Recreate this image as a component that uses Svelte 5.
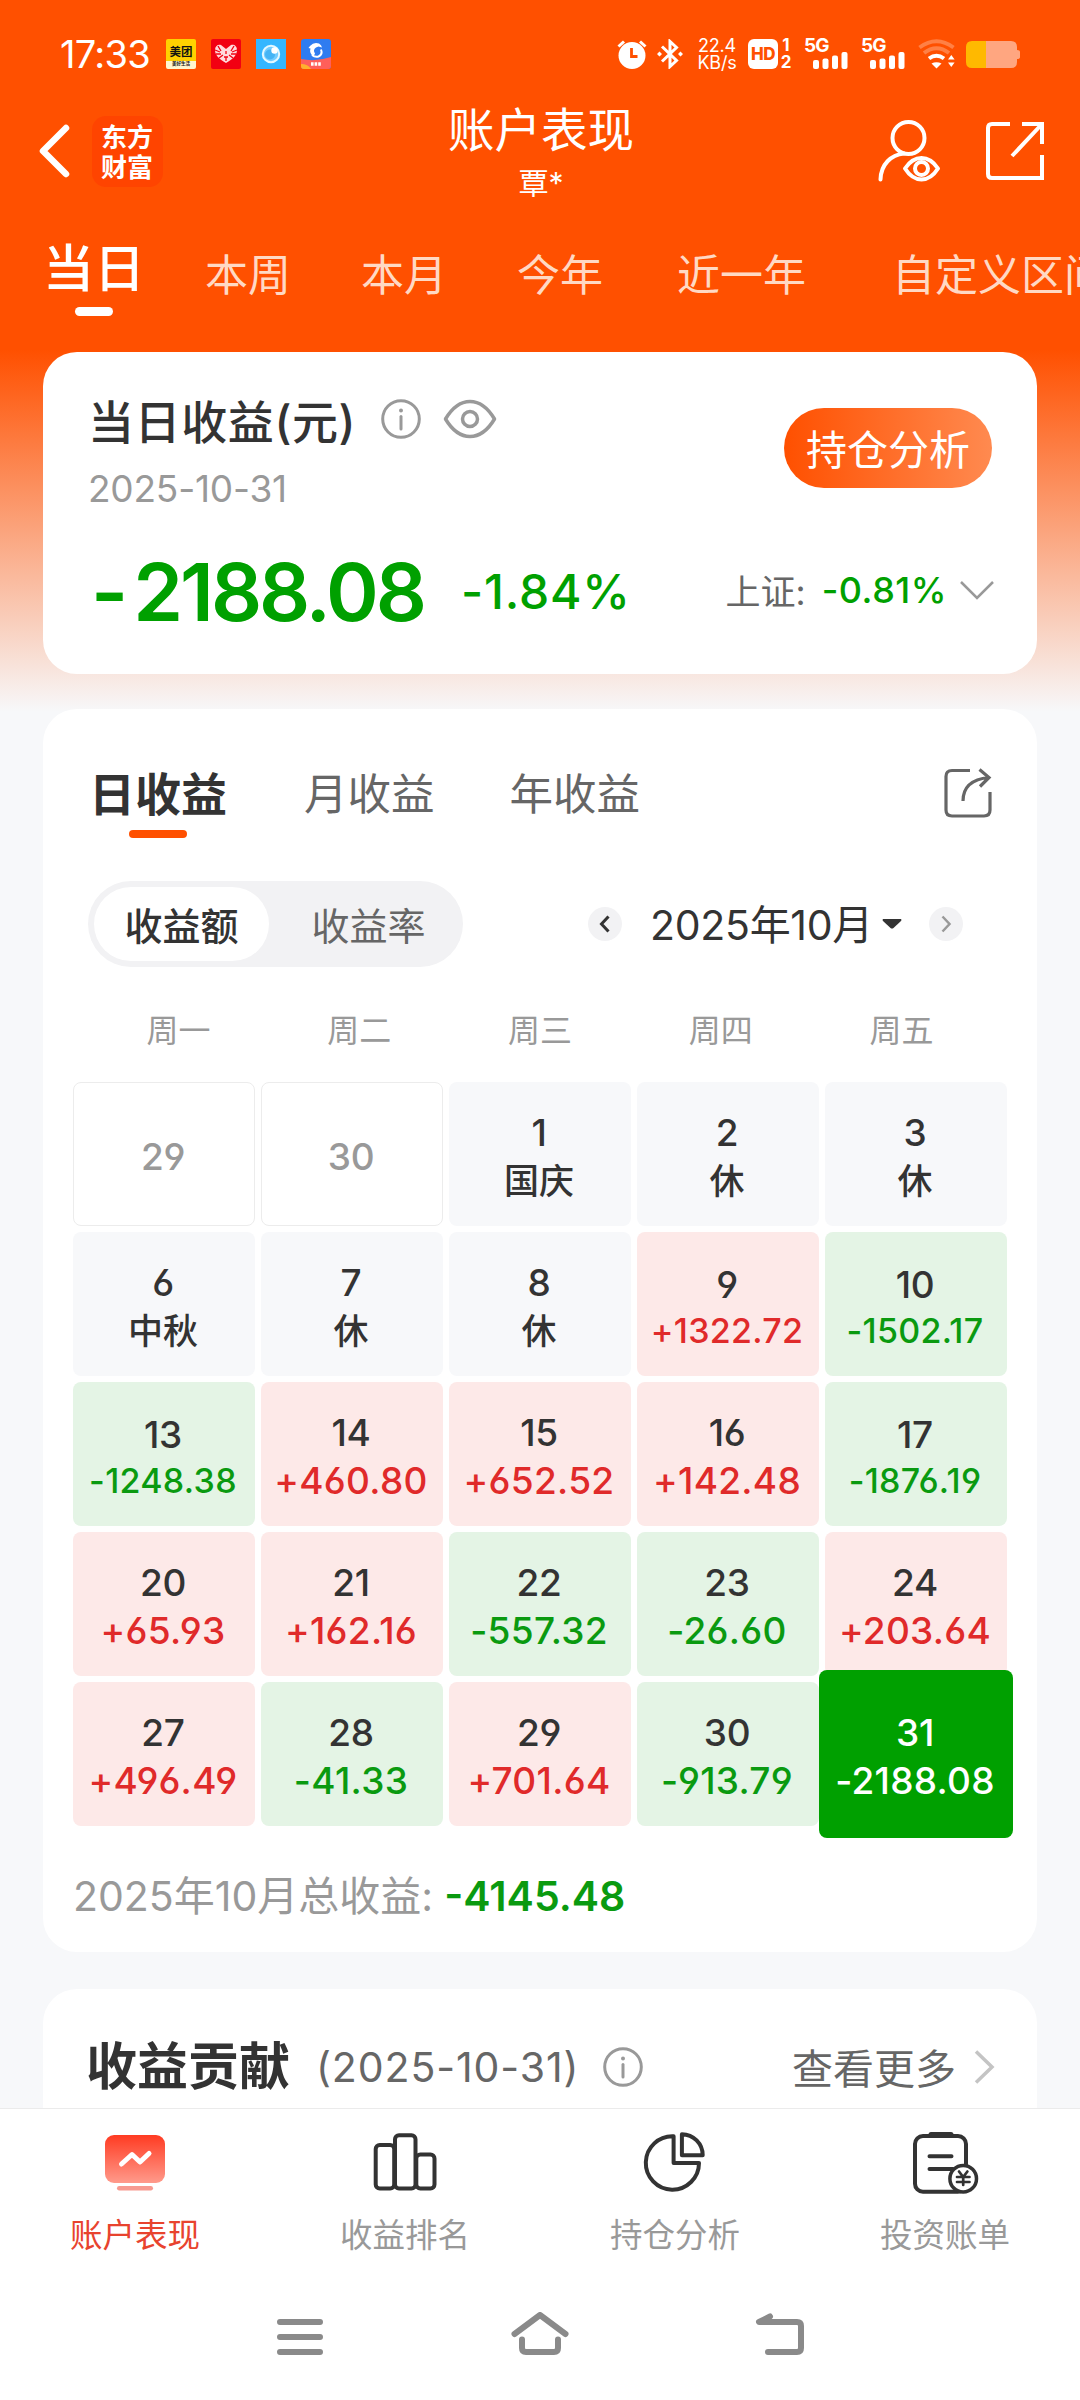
<script lang="ts">
	type Day = { day: number; text?: string; kind: 'out' | 'rest' | 'up' | 'down' };

	const rangeTabs = ['当日', '本周', '本月', '今年', '近一年', '自定义区间'];
	const profitTabs = ['日收益', '月收益', '年收益'];
	const weekdays = ['周一', '周二', '周三', '周四', '周五'];

	const days: Day[] = [
		{ day: 29, kind: 'out' },
		{ day: 30, kind: 'out' },
		{ day: 1, text: '国庆', kind: 'rest' },
		{ day: 2, text: '休', kind: 'rest' },
		{ day: 3, text: '休', kind: 'rest' },
		{ day: 6, text: '中秋', kind: 'rest' },
		{ day: 7, text: '休', kind: 'rest' },
		{ day: 8, text: '休', kind: 'rest' },
		{ day: 9, text: '+1322.72', kind: 'up' },
		{ day: 10, text: '-1502.17', kind: 'down' },
		{ day: 13, text: '-1248.38', kind: 'down' },
		{ day: 14, text: '+460.80', kind: 'up' },
		{ day: 15, text: '+652.52', kind: 'up' },
		{ day: 16, text: '+142.48', kind: 'up' },
		{ day: 17, text: '-1876.19', kind: 'down' },
		{ day: 20, text: '+65.93', kind: 'up' },
		{ day: 21, text: '+162.16', kind: 'up' },
		{ day: 22, text: '-557.32', kind: 'down' },
		{ day: 23, text: '-26.60', kind: 'down' },
		{ day: 24, text: '+203.64', kind: 'up' },
		{ day: 27, text: '+496.49', kind: 'up' },
		{ day: 28, text: '-41.33', kind: 'down' },
		{ day: 29, text: '+701.64', kind: 'up' },
		{ day: 30, text: '-913.79', kind: 'down' },
		{ day: 31, text: '-2188.08', kind: 'down' }
	];

	let activeRange = $state('当日');
	let activeProfit = $state('日收益');
	let mode = $state('收益额');
	let selected = $state(days.length - 1);

	// 金额太长时缩小字号
	function isLong(d: Day, i: number) {
		return d.kind !== 'rest' && i !== selected && (d.text?.length ?? 0) > 7;
	}
</script>

{#snippet info()}
	<svg class="info" width="40" height="40" viewBox="0 0 40 40" fill="none" stroke="#999" stroke-width="3">
		<circle cx="20" cy="20" r="18.3" />
		<path d="M20 17.5V30" stroke-linecap="round" />
		<circle cx="20" cy="11.5" r="2" fill="#999" stroke="none" />
	</svg>
{/snippet}

{#snippet signal()}
	<div class="signal">
		<span>5G</span>
		<svg width="36" height="17" viewBox="0 0 36 17" fill="#fff">
			<rect x="0" y="8" width="6" height="9" rx="2" />
			<rect x="9.5" y="6.5" width="6" height="10.5" rx="2" />
			<rect x="19" y="3.5" width="6" height="13.5" rx="2" />
			<rect x="28.5" y="0" width="6" height="17" rx="2" />
		</svg>
	</div>
{/snippet}

<main>
	<div class="status">
		<span class="time">17:33</span>
		<div class="apps">
			<div class="app meituan"><b>美团</b><i>美好生活</i></div>
			<svg width="30" height="30" viewBox="0 0 30 30">
				<rect width="30" height="30" rx="2" fill="#f20012" />
				<path d="M15 24C8 20 4 16 4 11C4 7 7 5 10 6L15 10L20 6C23 5 26 7 26 11C26 16 22 20 15 24Z" fill="#ffd9dc" />
				<path d="M4 11l5 2M7 7l3 5M5 15l5 0M8 19l4-3M26 11l-5 2M23 7l-3 5M25 15h-5M22 19l-4-3M15 12v3M13 18h4M15 18v4" stroke="#f20012" stroke-width="1.3" />
			</svg>
			<svg width="30" height="30" viewBox="0 0 30 30">
				<rect width="30" height="30" fill="#35b6ff" />
				<circle cx="15" cy="15" r="8.2" fill="#72ccff" stroke="#e4f8ff" stroke-width="2" />
				<circle cx="14" cy="15.500" r="5" fill="#45b4f5" />
				<circle cx="18.5" cy="11.5" r="3.2" fill="#fff" />
			</svg>
			<svg width="30" height="30" viewBox="0 0 30 30">
				<rect width="30" height="30" rx="3" fill="#2f7cf0" />
				<path d="M0 20Q15 23 30 18V27Q30 30 27 30H3Q0 30 0 27Z" fill="#ff5f5a" />
				<path d="M0 25Q7 25 10 30H3Q0 30 0 27Z" fill="#ffb02e" />
				<path d="M9 7Q13 2.500 18 4.500Q20.500 6 21 8.500L17.500 7.500L15 8.500Q11.500 11 14 14.500L12.500 17.500Q8 14 9.500 9.500L7.500 9Z" fill="#fff" />
				<path d="M20 10.500Q22 15.500 17.500 17.500Q14 18.500 11 16" fill="none" stroke="#fff" stroke-width="2" />
				<path d="M10 25h10" stroke="#fff" stroke-width="3.5" stroke-dasharray="2.6 1" />
			</svg>
		</div>
		<div class="right">
			<svg width="30" height="30" viewBox="0 0 30 30" fill="none">
				<circle cx="15" cy="16.5" r="13.5" fill="#fff" />
				<path d="M1.500 7.5L7 2.500M28.500 7.5L23 2.500" stroke="#fff" stroke-width="3" />
				<path d="M14.500 9V17.5H20.5" stroke="#ff5000" stroke-width="2.8" />
			</svg>
			<svg class="bt" width="26" height="30" viewBox="0 0 26 30" fill="none" stroke="#fff" stroke-width="3">
				<path d="M5 7.5L19.500 21.500L13 27.5V2.5L19.500 8.500L5 22.5" />
				<path d="M2.5 12.5L5 15L2.5 17.5L0 15ZM23.5 12.5L26 15L23.5 17.5L21 15Z" fill="#fff" stroke="none" />
			</svg>
			<div class="speed"><span>22.4</span><span>KB/s</span></div>
			<div class="hd">HD</div>
			<div class="sim"><span>1</span><span>2</span></div>
			{@render signal()}
			{@render signal()}
			<svg class="wifi" width="38" height="30" viewBox="0 0 38 30" fill="none">
				<path d="M1.5 8.5Q18.500 -4 35.500 8.500" stroke="#ff8045" stroke-width="4" />
				<path d="M6 14Q18.500 4.500 31 14" stroke="#ff8045" stroke-width="4" />
				<path d="M11 19.500Q18.500 14 26 19.500" stroke="#fff" stroke-width="4" />
				<path d="M13.500 24.500Q18.500 22 23.500 24.500L18.500 29.500Z" fill="#fff" />
				<path d="M30 20.500L33.300 16L36.600 20.500ZM30 23.500L33.300 28L36.600 23.500Z" fill="#fff" />
			</svg>
			<svg width="54" height="27" viewBox="0 0 54 27">
				<path d="M6 0H20V27H6Q0 27 0 21V6Q0 0 6 0Z" fill="#ffb900" />
				<path d="M20 0H45Q51 0 51 6V9Q54 9 54 11V16Q54 18 51 18V21Q51 27 45 27H20Z" fill="#ffa680" />
			</svg>
		</div>
	</div>

	<header>
		<div class="side">
			<svg width="34" height="56" viewBox="0 0 34 56" fill="none" stroke="#fff" stroke-width="6.500" stroke-linecap="round" stroke-linejoin="round">
				<path d="M29 5L6 28L29 51" />
			</svg>
			<div class="logo">东方财富</div>
		</div>
		<div class="title">
			<h1>账户表现</h1>
			<p>覃*</p>
		</div>
		<div class="side end">
			<svg width="64" height="64" viewBox="0 0 64 64" fill="none" stroke="#fff" stroke-width="4" stroke-linecap="round">
				<circle cx="31.500" cy="19" r="16" />
				<path d="M27 34.500C14 36 4 45 3.500 60.500" />
				<path d="M28 49.500Q35 39 44.500 39T61 49.500Q54 60.500 44.500 60.500T28 49.500Z" stroke-linejoin="round" />
				<circle cx="44.500" cy="49.500" r="6.500" />
			</svg>
			<svg width="60" height="60" viewBox="0 0 60 60" fill="none" stroke="#fff" stroke-width="4">
				<path d="M25 3H7Q3 3 3 7V53Q3 57 7 57H57V34M37 3H57V23M57 3L27 35" />
			</svg>
		</div>
	</header>

	<nav class="ranges">
		{#each rangeTabs as tab}
			<button class:active={activeRange === tab} onclick={() => (activeRange = tab)}>{tab}</button>
		{/each}
	</nav>

	<section class="card summary">
		<div class="summary-head">
			<div>
				<h2>
					<span>当日收益(元)</span>
					{@render info()}
					<svg class="eye" width="54" height="40" viewBox="0 0 54 40" fill="none" stroke="#999" stroke-width="3.500">
						<path d="M2.500 20Q13 2.500 27 2.500T51.500 20Q41 37.500 27 37.500T2.500 20Z" stroke-linejoin="round" />
						<circle cx="27" cy="20" r="7.500" />
					</svg>
				</h2>
				<p class="date">2025-10-31</p>
			</div>
			<button class="analyse">持仓分析</button>
		</div>
		<div class="figures">
			<span class="amount"><i>-</i>2188.08</span>
			<span class="rate">-1.84%</span>
			<span class="index">上证:</span>
			<span class="index-rate">-0.81%</span>
			<svg width="34" height="22" viewBox="0 0 34 22" fill="none" stroke="#999" stroke-width="2.500">
				<path d="M1 2L17 18L33 2" />
			</svg>
		</div>
	</section>

	<section class="card calendar">
		<div class="profit-tabs">
			{#each profitTabs as tab}
				<button class:active={activeProfit === tab} onclick={() => (activeProfit = tab)}>{tab}</button>
			{/each}
			<svg width="48" height="50" viewBox="0 0 48 50" fill="none" stroke="#666" stroke-width="3.200">
				<path d="M26 2.500H8Q2 2.500 2 8.500V42Q2 48 8 48H40Q46 48 46 42V24" />
				<path d="M19 33Q19 12 45 9.500M35.500 1.500L45 9.500L36 18.500" />
			</svg>
		</div>

		<div class="controls">
			<div class="toggle">
				{#each ['收益额', '收益率'] as m}
					<button class:active={mode === m} onclick={() => (mode = m)}>{m}</button>
				{/each}
			</div>
			<div class="month">
				<svg width="34" height="34" viewBox="0 0 34 34" fill="none">
					<circle cx="17" cy="17" r="17" fill="#f2f2f4" />
					<path d="M20.500 9.500L13.500 17L20.500 24.500" stroke="#333" stroke-width="3" />
				</svg>
				<span>2025年10月</span>
				<svg class="caret" width="20" height="10" viewBox="0 0 20 10" fill="#333"><path d="M1 0H19Q20 1 19 2L11.500 9Q10 10 8.500 9L1 2Q0 1 1 0Z" /></svg>
				<svg width="34" height="34" viewBox="0 0 34 34" fill="none">
					<circle cx="17" cy="17" r="17" fill="#f2f2f4" />
					<path d="M13.500 9.500L20.500 17L13.500 24.500" stroke="#999" stroke-width="2.500" />
				</svg>
			</div>
		</div>

		<div class="weekdays">
			{#each weekdays as w}
				<span>{w}</span>
			{/each}
		</div>

		<div class="grid">
			{#each days as d, i}
				<button class="day {d.kind}" class:long={isLong(d, i)} class:selected={i === selected} onclick={() => (selected = i)}>
					<span>{d.day}</span>
					{#if d.text}
						<span class="value">{d.text}</span>
					{/if}
				</button>
			{/each}
		</div>

		<p class="total"><span>2025年10月总收益:</span><b>-4145.48</b></p>
	</section>

	<section class="card contribution">
		<h2>收益贡献</h2>
		<span class="sub">(2025-10-31)</span>
		{@render info()}
		<span class="more">查看更多</span>
		<svg width="21" height="34" viewBox="0 0 21 34" fill="none" stroke="#c4c4c4" stroke-width="3.500">
			<path d="M2 1.500L18 17L2 32.500" />
		</svg>
	</section>

	<footer>
		<div class="item active">
			<svg width="70" height="70" viewBox="0 0 70 70" fill="none">
				<defs>
					<linearGradient id="screen" x1="0" y1="0" x2="0" y2="1">
						<stop offset="0" stop-color="#ff3b22" />
						<stop offset="1" stop-color="#ff9a8b" />
					</linearGradient>
				</defs>
				<rect x="5" y="7" width="60" height="48" rx="9" fill="url(#screen)" />
				<path d="M21.500 36L32 26.500L40 34L49 25.500" stroke="#fff" stroke-width="5" stroke-linecap="round" stroke-linejoin="round" />
				<rect x="17" y="58" width="36" height="4.500" rx="2.200" fill="#f79a90" />
			</svg>
			<span>账户表现</span>
		</div>
		<div class="item">
			<svg width="70" height="70" viewBox="0 0 70 70" fill="none" stroke="#333" stroke-width="4">
				<rect x="5.700" y="17" width="18.500" height="43.500" rx="4" />
				<rect x="25" y="7.300" width="20.500" height="53.200" rx="4" />
				<rect x="46.300" y="26.500" width="18.200" height="34" rx="4" />
			</svg>
			<span>收益排名</span>
		</div>
		<div class="item">
			<svg width="70" height="70" viewBox="0 0 70 70" fill="none" stroke="#333" stroke-width="4" stroke-linejoin="round">
				<path d="M33.600 8.300A26.600 26.700 0 1 0 59 35H33.600Z" />
				<path d="M41.900 6.200A21 21 0 0 1 62.700 27.300H41.900Z" />
			</svg>
			<span>持仓分析</span>
		</div>
		<div class="item">
			<svg width="70" height="70" viewBox="0 0 70 70" fill="none" stroke="#333" stroke-width="4" stroke-linecap="round">
				<rect x="5" y="8" width="51" height="55.700" rx="8" />
				<path d="M21 6.500H41" stroke-width="5" />
				<path d="M19.500 28.300H41.500M19.500 41H43" />
				<circle cx="53.200" cy="50.700" r="13.300" fill="#fff" stroke-width="3.500" />
				<path d="M49 43.500L53.200 49L57.400 43.500M53.200 49V57M47 49H59.500M47 54H59.500" stroke-width="2.700" />
			</svg>
			<span>投资账单</span>
		</div>
	</footer>

	<div class="system">
		<svg width="60" height="50" viewBox="0 0 60 50" fill="none" stroke="#8a8a8a" stroke-width="6" stroke-linecap="round">
			<path d="M10 10H50M10 25H50M10 40H50" />
		</svg>
		<svg width="60" height="50" viewBox="0 0 60 50" fill="none" stroke="#8a8a8a" stroke-width="6" stroke-linecap="round" stroke-linejoin="round">
			<path d="M4.500 22L30 3L55.500 22M12 27.500V36Q12 40 16 40H44Q48 40 48 36V27.500" />
		</svg>
		<svg width="60" height="50" viewBox="0 0 60 50" fill="none" stroke="#8a8a8a" stroke-width="6" stroke-linecap="round" stroke-linejoin="round">
			<path d="M20 4.500L9 10H47Q51 10 51 14V36Q51 40 47 40H18" />
		</svg>
	</div>
</main>

<style>
	:global(body) {
		background: #f7f8fa;
	}

	main {
		display: flex;
		flex-direction: column;
		width: 1080px;
		height: 2400px;
		overflow: hidden;
		background: linear-gradient(to bottom, #ff5000 350px, #f7f8fa 712px);
		font-family: Inter, 'Noto Sans CJK SC', sans-serif;
		font-feature-settings: 'cv03', 'cv04';
		color: #333;
	}

	h1,
	h2,
	p {
		margin: 0;
	}

	button {
		padding: 0;
		border: 0;
		background: none;
		font: inherit;
		color: inherit;
		white-space: nowrap;
	}

	svg {
		flex: none;
		display: block;
	}

	.status {
		display: flex;
		align-items: center;
		box-sizing: border-box;
		height: 98px;
		padding: 10px 60px 0;
		color: #fff;
	}

	.time {
		width: 106px;
		font-size: 38px;
		letter-spacing: -0.7px;
	}

	.apps {
		display: flex;
		gap: 15px;
	}

	.app {
		display: flex;
		flex-direction: column;
		align-items: center;
		width: 30px;
		height: 30px;
		overflow: hidden;
		border-radius: 2px;
		color: #111;
		white-space: nowrap;
	}

	.meituan {
		background: linear-gradient(#ffd100 73%, #fff6cf 73%);
	}

	.meituan b {
		font-size: 11.5px;
		line-height: 26px;
		height: 22px;
	}

	.meituan i {
		font-size: 4.5px;
		font-style: normal;
		font-weight: 700;
		line-height: 6px;
	}

	.right {
		display: flex;
		align-items: center;
		margin-left: auto;
	}

	.bt {
		margin-left: 10px;
	}

	.speed {
		display: flex;
		flex-direction: column;
		align-items: center;
		width: 40px;
		margin-left: 14px;
		font-size: 18px;
		line-height: 17px;
		letter-spacing: -0.2px;
	}

	.hd {
		width: 30px;
		height: 30px;
		margin-left: 11px;
		border-radius: 6px;
		background: #fff;
		color: #ff5000;
		font-size: 17px;
		font-weight: 800;
		line-height: 30px;
		text-align: center;
		letter-spacing: -0.5px;
	}

	.sim {
		display: flex;
		flex-direction: column;
		width: 12px;
		margin-left: 2px;
		font-size: 17px;
		font-weight: 700;
		line-height: 17px;
		text-align: center;
	}

	.signal {
		width: 45px;
		height: 30px;
		margin-left: 12px;
		font-size: 19px;
		font-weight: 700;
		line-height: 14px;
	}

	.signal span {
		display: block;
		height: 13px;
		letter-spacing: -1px;
	}

	.signal svg {
		margin-left: 9px;
	}

	.wifi {
		margin: 0 10px 0 12px;
	}

	header {
		display: flex;
		align-items: center;
		height: 106px;
		padding: 0 35px 0 37px;
		color: #fff;
	}

	.side {
		flex: 1;
		display: flex;
		align-items: center;
		gap: 21px;
	}

	.end {
		justify-content: flex-end;
		gap: 44px;
	}

	.logo {
		box-sizing: border-box;
		width: 71px;
		height: 71px;
		padding: 5px 9px;
		border-radius: 14px;
		background: #ff4400;
		font-family: 'Noto Sans CJK SC', sans-serif;
		font-size: 26px;
		font-weight: 700;
		line-height: 30px;
		word-break: break-all;
	}

	.title {
		text-align: center;
	}

	.title h1 {
		font-size: 46.500px;
		font-weight: 400;
		line-height: 64px;
	}

	.title p {
		font-size: 30px;
		line-height: 42px;
	}

	.ranges {
		display: flex;
		align-items: flex-start;
		height: 148px;
		padding-left: 43px;
		font-size: 43px;
		line-height: 64px;
		color: #ffd9c4;
	}

	.ranges button {
		margin: 39px 70px 0 0;
	}

	.ranges button.active {
		display: flex;
		flex-direction: column;
		align-items: center;
		margin: 33px 60px 0 0;
		color: #fff;
		font-size: 51px;
		font-weight: 500;
	}

	.ranges button.active::after {
		content: '';
		width: 38px;
		height: 9px;
		margin-top: 6px;
		border-radius: 5px;
		background: #fff;
	}

	.ranges button:nth-child(4) {
		margin-right: 74px;
	}

	.ranges button:nth-child(5) {
		margin-right: 86px;
	}

	.card {
		box-sizing: border-box;
		margin: 0 43px;
		border-radius: 34px;
		background: #fff;
	}

	.summary {
		height: 322px;
		padding: 38px 43px 0 45px;
	}

	.summary-head {
		display: flex;
		justify-content: space-between;
	}

	.summary h2 {
		display: flex;
		align-items: center;
		font-size: 46px;
		font-weight: 500;
		line-height: 64px;
		letter-spacing: 0.6px;
	}

	.summary .info {
		margin: -7px 0 0 25px;
	}

	.eye {
		margin: -7px 0 0 22px;
	}

	.date {
		margin-top: 11px;
		font-size: 37px;
		line-height: 48px;
		letter-spacing: -0.2px;
		color: #999;
	}

	.analyse {
		width: 208px;
		height: 80px;
		margin: 18px 2px 0 0;
		padding-bottom: 2px;
		border-radius: 40px;
		background: linear-gradient(to right, #ff5000, #ff8a50);
		color: #fff;
		font-size: 41px;
	}

	.figures {
		display: flex;
		align-items: center;
		height: 96px;
		margin-top: 30px;
		white-space: nowrap;
		color: #00a000;
	}

	.amount {
		width: 370px;
		padding-left: 3px;
		font-size: 80px;
		font-weight: 600;
		letter-spacing: -3px;
	}

	.amount i {
		margin-right: 8px;
		font-style: normal;
	}

	.rate {
		font-size: 48px;
		font-weight: 500;
		letter-spacing: 0.8px;
	}

	.index {
		margin: -3px 0 0 auto;
		color: #666;
		font-size: 35px;
	}

	.index-rate {
		margin: -3px 13px 0 16px;
		font-size: 36px;
		font-weight: 500;
		letter-spacing: 0.5px;
	}

	.calendar {
		height: 1243px;
		margin-top: 35px;
		padding: 56px 30px 0;
	}

	.profit-tabs {
		display: flex;
		align-items: flex-start;
		height: 73px;
		padding: 0 15px 0 16px;
		line-height: 60px;
	}

	.profit-tabs button {
		margin: -1px 75px 0 0;
		color: #666;
		font-size: 43.500px;
	}

	.profit-tabs button.active {
		display: flex;
		flex-direction: column;
		align-items: center;
		margin-right: 77px;
		color: #333;
		font-size: 46px;
		font-weight: 700;
	}

	.profit-tabs button.active::after {
		content: '';
		width: 58px;
		height: 8px;
		margin-top: 6px;
		border-radius: 4px;
		background: #ff5000;
	}

	.profit-tabs svg {
		margin: 3px 0 0 auto;
	}

	.controls {
		display: flex;
		align-items: center;
		justify-content: space-between;
		margin-top: 43px;
		padding: 0 44px 0 15px;
	}

	.toggle {
		display: flex;
		box-sizing: border-box;
		width: 375px;
		height: 86px;
		padding: 6px;
		border-radius: 43px;
		background: #f2f2f4;
	}

	.toggle button {
		width: 175px;
		padding-bottom: 2px;
		border-radius: 37px;
		color: #666;
		font-size: 38px;
	}

	.toggle button + button {
		margin-left: 12px;
	}

	.toggle button.active {
		background: #fff;
		color: #333;
		font-weight: 500;
	}

	.month {
		display: flex;
		align-items: center;
		font-size: 41px;
		letter-spacing: -0.3px;
	}

	.month span {
		margin: -4px 0 0 28px;
	}

	.caret {
		margin: 0 27px 0 9px;
	}

	.weekdays {
		display: grid;
		grid-template-columns: repeat(5, 1fr);
		margin: 42px 15px 0;
		text-align: center;
		font-size: 32px;
		line-height: 44px;
		color: #999;
	}

	.grid {
		display: grid;
		grid-template-columns: repeat(5, 1fr);
		grid-auto-rows: 144px;
		gap: 6px;
		margin-top: 29px;
	}

	.day {
		display: flex;
		flex-direction: column;
		align-items: center;
		justify-content: center;
		box-sizing: border-box;
		padding: 5px 2px 0 0;
		border-radius: 8px;
		font-size: 37px;
		font-weight: 500;
		line-height: 48px;
		letter-spacing: -0.3px;
	}

	.value {
		letter-spacing: 0.3px;
	}

	.out {
		border: 1px solid #ececec;
		color: #999;
	}

	.rest {
		background: #f7f8fa;
	}

	.rest .value {
		font-size: 35px;
		letter-spacing: 0;
	}

	.up {
		background: #fde9e8;
	}

	.down {
		background: #e4f4e5;
	}

	.up .value {
		color: #e02a2a;
	}

	.down .value {
		color: #0a9a10;
	}

	.long {
		padding-top: 7px;
		line-height: 46px;
	}

	.long .value {
		font-size: 34px;
	}

	.selected {
		margin: -12px -6px;
		background: #00a000;
		color: #fff;
	}

	.selected .value {
		color: #fff;
	}

	.total {
		display: flex;
		margin-top: 42px;
		font-size: 41px;
		line-height: 56px;
		color: #999;
	}

	.total b {
		margin-left: 11px;
		color: #0a9a10;
		font-weight: 600;
	}

	.contribution {
		display: flex;
		align-items: center;
		height: 119px;
		margin-top: 37px;
		padding: 36px 42px 0 43px;
		border-radius: 34px 34px 0 0;
		white-space: nowrap;
	}

	.contribution h2 {
		font-size: 51px;
		font-weight: 700;
		line-height: 64px;
	}

	.sub {
		margin: 0 24px 0 26px;
		color: #666;
		font-size: 41px;
		letter-spacing: 0.9px;
	}

	.more {
		margin: -2px 18px 0 auto;
		color: #666;
		font-size: 41px;
	}

	footer {
		display: flex;
		box-sizing: border-box;
		height: 174px;
		padding-top: 19px;
		border-top: 1px solid #ebebeb;
		background: #fff;
	}

	.item {
		flex: 1;
		display: flex;
		flex-direction: column;
		align-items: center;
		gap: 16px;
		color: #999;
		font-size: 32.500px;
		line-height: 44px;
	}

	.item.active {
		color: #e8432e;
	}

	.system {
		flex: 1;
		display: flex;
		justify-content: center;
		gap: 180px;
		padding-top: 30px;
		background: #fff;
	}
</style>
